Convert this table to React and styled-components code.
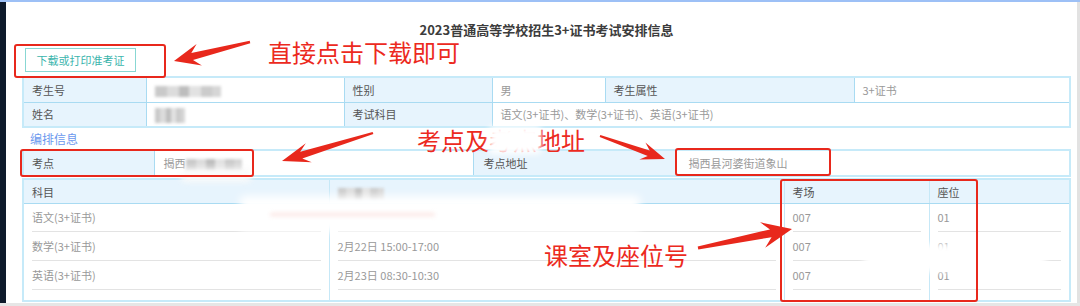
import React from 'react';
import styled, { createGlobalStyle } from 'styled-components';

const RED = '#e8281c';

const GlobalStyle = createGlobalStyle`
  html, body {
    margin: 0;
    padding: 0;
    background: #fff;
  }
  body {
    width: 1080px;
    height: 306px;
    overflow: hidden;
    font-family: "Noto Sans CJK SC", "Noto Sans", sans-serif;
  }
`;

const Page = styled.div`
  position: relative;
  width: 1080px;
  height: 306px;
  box-sizing: border-box;
  display: flex;
  border-top: 2px solid #9dc0f6;
  border-bottom: 3px solid #e6e6e6;
  background: #fff;
  overflow: hidden;
`;

const SideBar = styled.div`
  width: 6px;
  flex-shrink: 0;
  background: #0e1a2b;
`;

const EdgeBar = styled.div`
  width: 3px;
  flex-shrink: 0;
  background: #e2e2e2;
`;

const Main = styled.div`
  flex: 1;
  display: flex;
  flex-direction: column;
  padding: 0 6px 0 16px;
`;

const Title = styled.h1`
  margin: 0;
  padding-top: 20px;
  font-size: 13px;
  line-height: 16px;
  font-weight: bold;
  color: #3c3c3c;
  text-align: center;
`;

const ButtonRow = styled.div`
  display: flex;
  padding: 10px 0 4px 3px;
`;

const DownloadButton = styled.button`
  height: 24px;
  width: 111px;
  padding: 0;
  border: 1px solid #88d7d3;
  background: #fff;
  color: #3bb5ad;
  font-family: inherit;
  font-size: 11px;
  cursor: pointer;
`;

const Table = styled.table`
  width: 100%;
  table-layout: fixed;
  border-collapse: collapse;
  border: 2px solid #c6eaf9;
  font-size: 11px;
`;

const Row = styled.tr`
  height: ${(p) => p.$h || 25}px;
`;

const Cell = styled.td`
  border: 1px solid #a9dbf2;
  padding: 0 ${(p) => p.$pad ?? 8}px;
  background: ${(p) => (p.$label ? '#e7f4fd' : '#fff')};
  color: ${(p) => (p.$label ? '#555' : '#999')};
  white-space: nowrap;
  overflow: hidden;
  vertical-align: middle;
`;

const SectionLink = styled.div`
  font-size: 12px;
  line-height: 21px;
  height: 21px;
  padding-left: 8px;
  color: #6b98ee;
`;

const Gap = styled.div`
  height: ${(p) => p.$h}px;
`;

const HeadCell = styled.th`
  height: 23px;
  padding: 0 8px;
  text-align: left;
  font-weight: normal;
  color: #555;
  background: #e7f4fd;
  border-bottom: 1px solid #a9dbf2;
  border-left: 1px solid #c6e8f7;
`;

const BodyCell = styled.td`
  padding: 0 8px 1px;
  border-left: 1px solid #c6e8f7;
  color: #999;
  vertical-align: top;
`;

const Line = styled.div`
  height: 27px;
  line-height: 26px;
  border-bottom: 1px solid #e3e3e3;
  white-space: nowrap;
`;

const SpacerCell = styled.td`
  height: 9px;
  padding: 0;
  border-left: 1px solid #c6e8f7;
`;

const Pixels = styled.span`
  display: inline-block;
  vertical-align: middle;
  width: ${(p) => p.$w}px;
  height: ${(p) => p.$h}px;
  background: linear-gradient(
    90deg,
    #c9c9c9 0 18%,
    #dcdcdc 18% 36%,
    #bdbdbd 36% 52%,
    #e2e2e2 52% 70%,
    #cbcbcb 70% 86%,
    #d6d6d6 86% 100%
  );
  filter: blur(1.4px);
`;

const Overlay = styled.svg`
  position: absolute;
  left: 0;
  top: 0;
  pointer-events: none;
`;

const RedBox = styled.div`
  position: absolute;
  left: ${(p) => p.$x}px;
  top: ${(p) => p.$y}px;
  width: ${(p) => p.$w}px;
  height: ${(p) => p.$h}px;
  box-sizing: border-box;
  border: 2px solid ${RED};
  border-radius: 3px;
  pointer-events: none;
`;

const Note = styled.div`
  position: absolute;
  left: ${(p) => p.$x}px;
  top: ${(p) => p.$y}px;
  font-size: 24px;
  line-height: 24px;
  color: #ec2a1e;
  white-space: nowrap;
  font-family: "Noto Sans CJK SC", sans-serif;
`;

const Smudge = styled.div`
  position: absolute;
  left: ${(p) => p.$x}px;
  top: ${(p) => p.$y}px;
  width: ${(p) => p.$w}px;
  height: ${(p) => p.$h}px;
  background: ${(p) => p.$bg || '#fff'};
  filter: blur(${(p) => p.$blur ?? 3}px);
  border-radius: 4px;
  pointer-events: none;
`;

// tapered hand-drawn arrow, tip -> tail
const arrow = (tip, tail, head, wing, shaft, end) => {
  const dx = tail[0] - tip[0];
  const dy = tail[1] - tip[1];
  const len = Math.hypot(dx, dy);
  const ux = dx / len;
  const uy = dy / len;
  const px = -uy;
  const py = ux;
  const at = (d, w) => [tip[0] + ux * d + px * w, tip[1] + uy * d + py * w];
  const pts = [
    tip,
    at(head, wing),
    at(head * 0.72, shaft),
    [tail[0] + px * end, tail[1] + py * end],
    [tail[0] - px * end, tail[1] - py * end],
    at(head * 0.72, -shaft),
    at(head, -wing),
  ];
  return pts.map((p) => p.map((v) => v.toFixed(1)).join(',')).join(' ');
};

const arrows = [
  arrow([174, 59], [250, 40], 26, 11, 3.5, 1.2),
  arrow([282, 159], [373, 131], 28, 10, 3.5, 1.2),
  arrow([665, 157], [600, 134], 24, 9, 3, 1),
  arrow([792, 227], [698, 246], 30, 13, 4, 1.5),
];

const schedule = [
  { subject: '语文(3+证书)', time: '', room: '007', seat: '01' },
  { subject: '数学(3+证书)', time: '2月22日 15:00-17:00', room: '007', seat: '01' },
  { subject: '英语(3+证书)', time: '2月23日 08:30-10:30', room: '007', seat: '01' },
];

export default function App() {
  return (
    <>
      <GlobalStyle />
      <Page>
        <SideBar />
        <Main>
          <Title>2023普通高等学校招生3+证书考试安排信息</Title>
          <ButtonRow>
            <DownloadButton>下载或打印准考证</DownloadButton>
          </ButtonRow>

          <Table>
            <colgroup>
              <col style={{ width: 123 }} />
              <col style={{ width: 198 }} />
              <col style={{ width: 148 }} />
              <col style={{ width: 113 }} />
              <col style={{ width: 249 }} />
              <col />
            </colgroup>
            <tbody>
              <Row>
                <Cell $label>考生号</Cell>
                <Cell>
                  <Pixels $w={66} $h={11} />
                </Cell>
                <Cell $label>性别</Cell>
                <Cell>男</Cell>
                <Cell $label>考生属性</Cell>
                <Cell>3+证书</Cell>
              </Row>
              <Row>
                <Cell $label>姓名</Cell>
                <Cell>
                  <Pixels $w={30} $h={15} />
                </Cell>
                <Cell $label>考试科目</Cell>
                <Cell colSpan={3}>语文(3+证书)、数学(3+证书)、英语(3+证书)</Cell>
              </Row>
            </tbody>
          </Table>

          <SectionLink>编排信息</SectionLink>

          <Table>
            <colgroup>
              <col style={{ width: 131 }} />
              <col style={{ width: 319 }} />
              <col style={{ width: 203 }} />
              <col />
            </colgroup>
            <tbody>
              <Row $h={26}>
                <Cell $label $pad={8}>考点</Cell>
                <Cell $pad={9}>
                  揭西<Pixels $w={56} $h={12} />
                </Cell>
                <Cell $label $pad={10}>考点地址</Cell>
                <Cell $pad={12}>揭西县河婆街道象山</Cell>
              </Row>
            </tbody>
          </Table>

          <Gap $h={1} />

          <Table>
            <colgroup>
              <col style={{ width: 306 }} />
              <col style={{ width: 455 }} />
              <col style={{ width: 145 }} />
              <col />
            </colgroup>
            <thead>
              <tr>
                <HeadCell>科目</HeadCell>
                <HeadCell>
                  <Pixels $w={46} $h={12} />
                </HeadCell>
                <HeadCell>考场</HeadCell>
                <HeadCell>座位</HeadCell>
              </tr>
            </thead>
            <tbody>
              {schedule.map((r) => (
                <tr key={r.subject}>
                  <BodyCell>
                    <Line>{r.subject}</Line>
                  </BodyCell>
                  <BodyCell>
                    <Line>{r.time}</Line>
                  </BodyCell>
                  <BodyCell>
                    <Line>{r.room}</Line>
                  </BodyCell>
                  <BodyCell>
                    <Line>{r.seat}</Line>
                  </BodyCell>
                </tr>
              ))}
              <tr>
                <SpacerCell />
                <SpacerCell />
                <SpacerCell />
                <SpacerCell />
              </tr>
            </tbody>
          </Table>
        </Main>
        <EdgeBar />

        {/* redaction smudges */}
        <Smudge $x={240} $y={194} $w={400} $h={36} $blur={4} />
        <Smudge $x={270} $y={211} $w={165} $h={3} $bg="#fbe3e0" $blur={2} />
        <Smudge $x={864} $y={242} $w={182} $h={28} $blur={3} />
        <Smudge $x={181} $y={166} $w={70} $h={14} $bg="#fafafa" $blur={3} />

        {/* annotations */}
        <RedBox $x={14} $y={42} $w={152} $h={34} />
        <RedBox $x={20} $y={147} $w={234} $h={28} />
        <RedBox $x={675} $y={146} $w={156} $h={28} />
        <RedBox $x={780} $y={177} $w={198} $h={123} />

        <Note $x={268} $y={38}>直接点击下载即可</Note>
        <Note $x={417} $y={126}>考点及考点地址</Note>
        <Smudge $x={489} $y={124} $w={52} $h={28} $blur={3} />
        <Note $x={544} $y={241}>课室及座位号</Note>

        <Overlay width="1080" height="306" viewBox="0 0 1080 306">
          {arrows.map((pts, i) => (
            <polygon key={i} points={pts} fill={RED} />
          ))}
        </Overlay>
      </Page>
    </>
  );
}
